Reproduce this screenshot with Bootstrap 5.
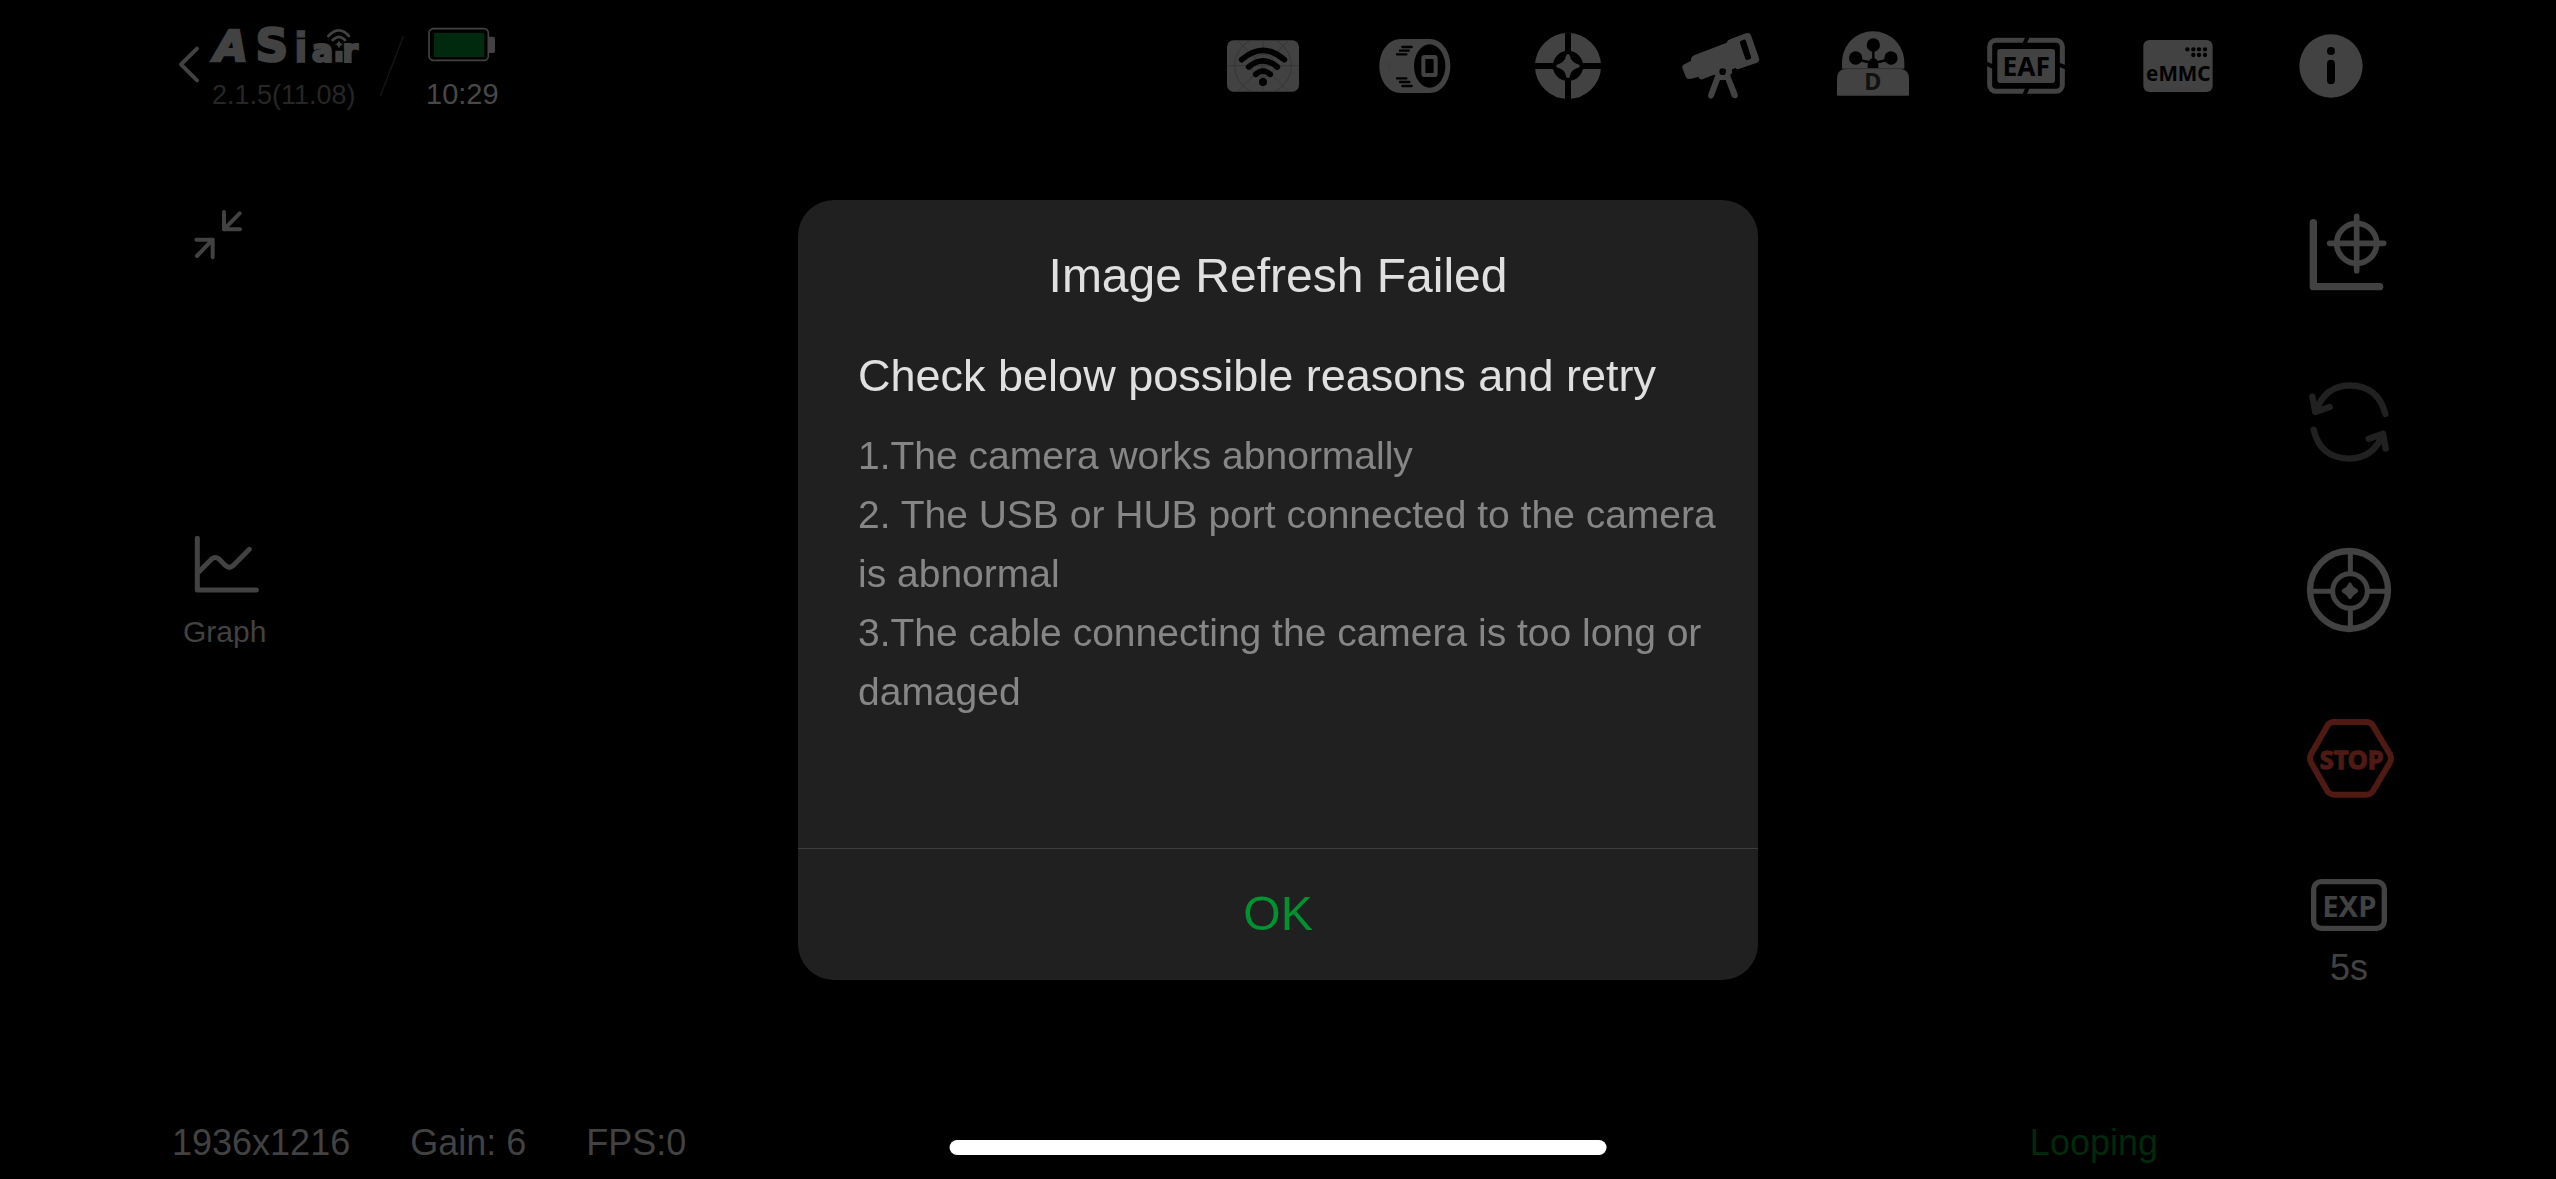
<!DOCTYPE html>
<html lang="en" data-bs-theme="dark">
<head>
<meta charset="utf-8">
<meta name="viewport" content="width=device-width, initial-scale=1">
<title>ASIair</title>
<link href="https://cdn.jsdelivr.net/npm/bootstrap@5.3.0/dist/css/bootstrap.min.css" rel="stylesheet">
<style>
  :root { --ink: #424242; --hole: #000; }
  body { background: #000; color: var(--ink); font-family: "Liberation Sans", Arial, sans-serif; }
  svg { display: block; overflow: visible; }
  .tool { background: none; border: 0; padding: 0; color: var(--ink); display: block; }
  .fillk { fill: currentColor; }
  .linek { fill: none; stroke: currentColor; stroke-linecap: round; stroke-linejoin: round; }
  .cut { fill: var(--hole); }
  .cutline { fill: none; stroke: var(--hole); stroke-linecap: round; }
  .topbar { padding: 25px 184px 0 175px; }
  .version { font-size: 27px; line-height: 40px; color: #262626; margin-top: 5px; padding-left: 3px; }
  .clock { font-size: 29px; line-height: 40px; color: #484848; margin-top: 9px; }
  .devices { width: 45vw; }
  .stage { padding: 0 157px 0 183px; }
  .left-tools { padding-top: 90px; gap: 265px; }
  .right-tools { padding-top: 87px; gap: 69px; }
  .graph-label { font-size: 30px; line-height: 40px; margin-top: 17px; }
  .exp-label { font-size: 36px; line-height: 40px; margin-top: 16px; }
  .statusbar { padding: 0 398px 16px 172px; font-size: 36px; line-height: 40px; }
  .stats { gap: 60px; }
  .looping { color: #00290e; }
  .dim { color: #212121; }
  .stop { color: #4f1a14; }
  .icon-text { font-family: "Noto Sans", "Open Sans", sans-serif; font-weight: 700; text-anchor: middle; }
  .logo-text { font-family: "DejaVu Sans", sans-serif; font-weight: 700; fill: currentColor; stroke: currentColor; }
  .home-bar { width: 25.7vw; height: 15px; bottom: 24px; background: #fff; z-index: 1060; }
  .alert-dialog { max-width: 960px; }
  .alert-box { background: #202020; border: 0; border-radius: 36px; overflow: hidden; }
  .alert-main { min-height: 648px; padding: 46px 40px 40px 60px; }
  .alert-heading-text { font-size: 48px; line-height: 60px; color: #e0e0e0; margin: 0 0 40px; padding-right: 20px; font-weight: 400; }
  .alert-sub { font-size: 45px; line-height: 60px; color: #e0e0e0; margin: 0 0 20px; }
  .reasons { font-size: 39px; line-height: 59px; color: #868686; }
  .ok-btn { background: none; border: 0; border-top: 1px solid #3d3d3d; color: #009230; font-size: 48px; line-height: 60px; padding: 35px 0 36px; }
</style>
</head>
<body>
<div class="d-flex flex-column min-vh-100">
  <header class="topbar d-flex justify-content-between align-items-start">
    <div class="d-flex align-items-start">
      <button class="tool" type="button" aria-label="Back">
        <svg width="30" height="80" viewBox="45 45 90 240"><path class="linek" stroke-width="12" d="M111 116 63 163l48 48"/></svg>
      </button>
      <div class="ms-1">
        <svg width="150" height="45" viewBox="150 45 450 135" role="img" aria-label="ASIair">
          <g class="logo-text">
            <text font-size="130" font-style="oblique" stroke-width="8" x="166" y="154">A</text>
            <text font-size="134" stroke-width="8" x="290" y="154">S</text>
            <text font-size="120" stroke-width="4" x="405" y="156">i</text>
            <text font-size="96" stroke-width="6" x="458" y="155">a</text>
            <text font-size="96" stroke-width="6" x="550" y="155">r</text>
          </g>
          <path class="fillk" d="M529 122h22v35h-22zM540 90q2 11 13 13-11 2-13 13-2-11-13-13 11-2 13-13z"/>
          <path class="linek" stroke-width="8" d="M508 78q32-34 62 0M521 90q19-19 37 0"/>
        </svg>
        <div class="version">2.1.5(11.08)</div>
      </div>
      <svg class="ms-3" width="35" height="80" viewBox="645 45 105 240"><path d="M730 79 661 258" stroke="#151515" stroke-width="4"/></svg>
      <div class="d-flex flex-column align-items-center ms-3">
        <svg width="70" height="40" viewBox="795 45 210 120" role="img" aria-label="Battery">
          <rect x="801" y="56" width="178" height="95" rx="13" fill="none" stroke="#424242" stroke-width="5"/>
          <rect x="816" y="69" width="151" height="72" fill="#002a0e"/>
          <path class="fillk" d="M981 80h12q6 0 6 6v37q0 6-6 6h-12z"/>
        </svg>
        <div class="clock">10:29</div>
      </div>
    </div>
    <nav class="devices d-flex justify-content-between" aria-label="Devices">
      <button class="tool" type="button" aria-label="Wi-Fi">
        <svg width="82" height="82" viewBox="69 45 246 246">
          <clipPath id="wifiPlate"><rect x="84" y="91" width="216" height="154" rx="20"/></clipPath>
          <rect class="fillk" x="84" y="91" width="216" height="154" rx="20"/>
          <g fill="none" stroke="#363636" stroke-width="3" clip-path="url(#wifiPlate)"><circle cx="192" cy="167" r="85"/><circle cx="192" cy="167" r="35"/><path d="M84 167h216M192 91v154M115 91l154 154M269 91 115 245"/></g>
          <path class="cutline" stroke-width="17" d="M128 149q64-56 128 0M149 171q43-37 86 0M170 193q22-19 44 0"/>
          <circle class="cut" cx="192" cy="216" r="12"/>
        </svg>
      </button>
      <button class="tool" type="button" aria-label="Camera">
        <svg width="82" height="82" viewBox="518 45 246 246">
          <path class="fillk" d="M598 87h88c34 0 61 36 61 81s-27 81-61 81h-88c-36 0-64-36-64-81s28-81 64-81z"/>
          <ellipse class="cut" cx="685" cy="168" rx="47" ry="65"/>
          <rect x="666" y="141" width="37" height="54" rx="4" fill="none" stroke="#424242" stroke-width="12"/>
          <path class="cutline" stroke-width="7" d="M603 111h28M596 122h26M587 133h28M587 205h28M596 216h28M603 228h28"/>
          <path d="M563 156v24" stroke="#363636" stroke-width="2"/>
        </svg>
      </button>
      <button class="tool" type="button" aria-label="Guide">
        <svg width="82" height="82" viewBox="984 45 246 246">
          <circle cx="1107" cy="168" r="72" fill="none" stroke="#424242" stroke-width="54"/>
          <path d="M1107 65v206M1004 168h206" stroke="#000" stroke-width="18"/>
          <circle class="cut" cx="1107" cy="168" r="45"/>
          <path class="fillk" d="M1107 132q5 0 7 10 5 15 19 19 10 3 10 7t-10 7q-14 4-19 19-2 10-7 10t-7-10q-5-15-19-19-10-3-10-7t10-7q14-4 19-19 2-10 7-10z"/>
        </svg>
      </button>
      <button class="tool" type="button" aria-label="Telescope">
        <svg width="82" height="82" viewBox="120 45 246 246">
          <path class="fillk" d="M136 161 153 153Q152 141 162 136L260 98Q262 91 270 88L318 70Q329 66 333 76L357 145Q360 154 351 158L296 177Q290 179 287 174L276 178V190L270 195 293 252Q296 264 284 265 277 264 275 259L257 210H240L222 258Q218 267 211 266 202 263 205 252L226 196 222 194 187 208Q179 210 175 201L150 207Q141 208 137 200L127 174Q125 165 136 161Z"/>
          <circle class="cut" cx="248" cy="185" r="10"/>
          <path class="cut" d="M303 92l8-3q5-1 7 4l15 47q2 6-4 8l-7 2q-5 1-6-4l-16-46q-2-6 3-8z"/>
        </svg>
      </button>
      <button class="tool" type="button" aria-label="Filter wheel">
        <svg width="82" height="82" viewBox="579 45 246 246">
          <path class="fillk" d="M609 176v-17c0-54 42-95 93-95s94 41 94 95v17z"/>
          <g class="cut"><circle cx="703" cy="105" r="20"/><circle cx="650" cy="144" r="20"/><circle cx="756" cy="144" r="20"/><path d="M686 174v-10l6-15q10-10 22 0l4 15v10z"/></g>
          <path class="cutline" stroke-width="7" d="M703 110v45M650 147l50 12M756 147l-50 12"/>
          <path class="fillk" d="M617 177h170q23 4 23 29v48q0 3-4 3H598q-4 0-4-3v-48q0-25 23-29z"/>
          <path d="M612 176h180" stroke="#333" stroke-width="2"/>
          <text class="icon-text" x="701" y="240" font-size="70" fill="#111">D</text>
        </svg>
      </button>
      <button class="tool" type="button" aria-label="Focuser">
        <svg width="82" height="82" viewBox="75 45 246 246">
          <rect x="89" y="91" width="218" height="153" rx="19" fill="none" stroke="#424242" stroke-width="15"/>
          <path d="M203 80 193 102M203 233l-10 22M78 160l25 12M294 163l24 9" stroke="#000" stroke-width="12"/>
          <rect class="fillk" x="112" y="117" width="173" height="102" rx="8"/>
          <text class="icon-text cut" x="199" y="197" font-size="79">EAF</text>
        </svg>
      </button>
      <button class="tool" type="button" aria-label="Storage">
        <svg width="82" height="82" viewBox="534 45 246 246">
          <rect class="fillk" x="553" y="90" width="208" height="156" rx="18"/>
          <path class="cutline" stroke-width="13" d="M685 118h.1M703 118h.1M720 118h.1M738 118h.1M703 135h.1M720 135h.1M738 135h.1"/>
          <text class="icon-text cut" x="658" y="212" font-size="62">eMMC</text>
        </svg>
      </button>
      <button class="tool" type="button" aria-label="Information">
        <svg width="82" height="82" viewBox="990 45 246 246">
          <circle class="fillk" cx="1113" cy="168" r="95"/>
          <circle class="cut" cx="1113" cy="123" r="12"/>
          <path class="cutline" stroke-width="24" d="M1113 161v50"/>
        </svg>
      </button>
    </nav>
  </header>

  <main class="stage d-flex justify-content-between flex-grow-1">
    <div class="left-tools d-flex flex-column align-items-center">
      <button class="tool" type="button" aria-label="Shrink image">
        <svg width="70" height="60" viewBox="90 45 210 180"><path class="linek" stroke-width="12" d="M192 66v52h48M192 118l47-48M109 149h49v53M158 149l-47 49"/></svg>
      </button>
      <button class="tool" type="button">
        <svg class="mx-auto" width="75" height="65" viewBox="83 30 225 195"><path class="linek" stroke-width="15" d="M114 55v155h177M119 155l38-38q11-9 22 0l20 20q11 10 22 0l49-49"/></svg>
        <span class="graph-label d-block">Graph</span>
      </button>
    </div>
    <div class="right-tools d-flex flex-column align-items-center">
      <button class="tool" type="button" aria-label="Star position">
        <svg width="100" height="100" viewBox="57 36 300 300"><path class="linek" stroke-width="22" d="M100 98v192h199"/><g class="linek" stroke-width="17"><circle cx="230" cy="160" r="60"/><path d="M230 79v163M149 160h162"/></g></svg>
      </button>
      <button class="tool dim" type="button" aria-label="Refresh" disabled>
        <svg width="100" height="100" viewBox="57 543 300 300"><path class="linek" stroke-width="19" d="M106 666Q135 587 208 586 295 587 316 672M97 620l9 46 43-15M101 719Q120 804 208 806 282 804 309 731M266 746l43-15 8 45"/></svg>
      </button>
      <button class="tool" type="button" aria-label="Guide target">
        <svg width="100" height="100" viewBox="57 30 300 300"><g fill="none" stroke="#424242"><circle cx="207" cy="180" r="117" stroke-width="19"/><circle cx="210" cy="183" r="52" stroke-width="15"/><path stroke-width="15" d="M211 68v63M211 235v58M95 184h62M263 184h62"/></g><path class="fillk" d="M210 157q4 0 7 8 4 8 10 10 8 4 8 8t-8 8q-6 2-10 10-3 7-7 7t-7-7q-4-8-10-10-8-4-8-8t8-8q6-2 10-10 3-8 7-8z"/></svg>
      </button>
      <button class="tool stop" type="button" aria-label="Stop">
        <svg width="100" height="100" viewBox="57 537 300 300"><path class="linek" stroke-width="18" d="M163 576h95q14 0 21 11l50 84q8 14 0 28l-50 84q-7 11-21 11h-95q-14 0-21-11l-48-84q-8-14 0-28l48-84q7-11 21-11z"/><text class="icon-text fillk" x="215" y="718" font-size="76" stroke="currentColor" stroke-width="4">STOP</text></svg>
      </button>
      <button class="tool" type="button">
        <svg width="100" height="54" viewBox="57 54 300 162"><rect x="101" y="65" width="212" height="140" rx="23" fill="none" stroke="#424242" stroke-width="16"/><text class="icon-text fillk" x="208" y="170" font-size="88">EXP</text></svg>
        <span class="exp-label d-block">5s</span>
      </button>
    </div>
  </main>

  <footer class="statusbar d-flex justify-content-between">
    <div class="stats d-flex"><span>1936x1216</span><span>Gain: 6</span><span>FPS:0</span></div>
    <span class="looping">Looping</span>
  </footer>
</div>

<div class="modal d-block" tabindex="-1" role="dialog" aria-modal="true" aria-labelledby="alertTitle">
  <div class="modal-dialog modal-dialog-centered alert-dialog">
    <div class="modal-content alert-box">
      <div class="alert-main">
        <h1 class="alert-heading-text text-center" id="alertTitle">Image Refresh Failed</h1>
        <p class="alert-sub">Check below possible reasons and retry</p>
        <ul class="reasons list-unstyled mb-0">
          <li>1.The camera works abnormally</li>
          <li>2. The USB or HUB port connected to the camera is abnormal</li>
          <li>3.The cable connecting the camera is too long or damaged</li>
        </ul>
      </div>
      <button class="ok-btn w-100" type="button">OK</button>
    </div>
  </div>
</div>
<div class="home-bar position-fixed start-50 translate-middle-x rounded-pill"></div>
<script src="https://cdn.jsdelivr.net/npm/bootstrap@5.3.0/dist/js/bootstrap.bundle.min.js"></script>
</body>
</html>
